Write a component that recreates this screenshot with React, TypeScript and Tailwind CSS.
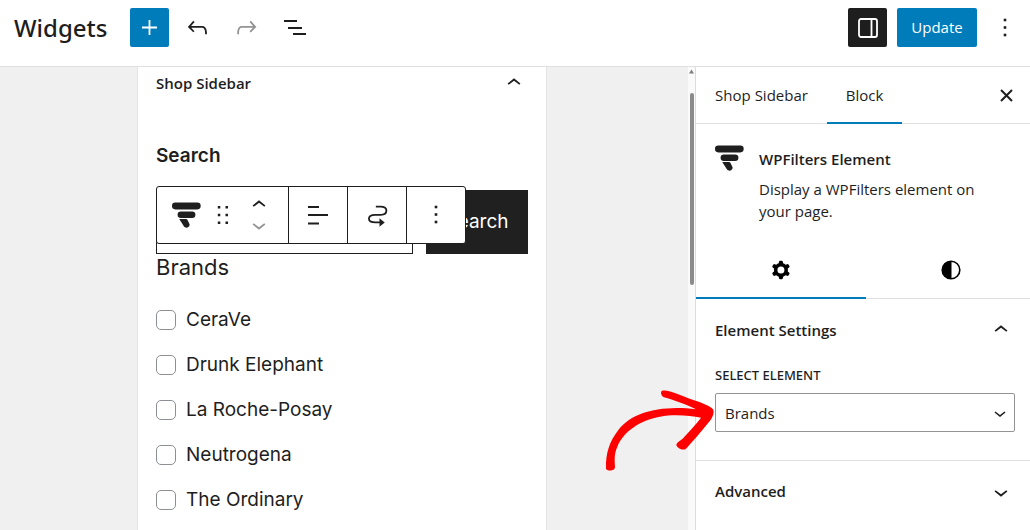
import React, { useState } from 'react';

const brands = ['CeraVe', 'Drunk Elephant', 'La Roche-Posay', 'Neutrogena', 'The Ordinary'];

const FilterLogo = () => (
    <svg className="h-[26px] w-[29px] shrink-0" viewBox="36 50 88 78" fill="currentColor">
        <rect x="36" y="51" width="87" height="21" rx="10" />
        <rect x="53" y="78" width="54" height="20" rx="10" />
        <path d="M58 101h21c2 0 3 1 4 3l6 12c3 10-11 16-17 7z" />
    </svg>
);

const ChevronUp = ({ className = 'size-7' }) => (
    <svg className={className} viewBox="0 0 24 24" fill="currentColor">
        <path d="M6.5 12.4L12 8l5.5 4.4-.9 1.2L12 10l-4.5 3.6-1-1.2z" />
    </svg>
);

const ChevronDown = ({ className = 'size-7' }) => (
    <svg className={className} viewBox="0 0 24 24" fill="currentColor">
        <path d="M17.5 11.6L12 16l-5.5-4.4.9-1.2L12 14l4.5-3.6 1 1.2z" />
    </svg>
);

const MoreIcon = () => (
    <svg className="size-7" viewBox="0 0 28 28" fill="currentColor">
        <rect x="12.7" y="4.7" width="2.6" height="2.6" />
        <rect x="12.7" y="12.2" width="2.6" height="2.6" />
        <rect x="12.7" y="19.7" width="2.6" height="2.6" />
    </svg>
);

const Header = () => (
    <header className="flex h-[67px] shrink-0 items-start justify-between border-b border-[#e0e0e0] bg-white pt-2 pr-2 pl-[14px]">
        <div className="flex h-[39px] items-center">
            <h1 className="mr-[23px] font-['Noto_Sans',sans-serif] text-2xl font-medium">Widgets</h1>
            <button aria-label="Add block" className="flex size-[39px] items-center justify-center rounded-[2px] bg-[#007cba] text-white">
                <svg className="size-[15px]" viewBox="0 0 15 15" stroke="currentColor" strokeWidth="1.8">
                    <path d="M7.5 0v15M0 7.5h15" />
                </svg>
            </button>
            <button aria-label="Undo" className="ml-[14px]">
                <svg className="size-[29px]" viewBox="0 0 24 24" fill="currentColor">
                    <path d="M18.3 11.7c-.6-.6-1.4-.9-2.3-.9H6.7l2.9-3.3-1.1-1-4.5 5L8.5 16l1-1-2.7-2.7H16c.5 0 .9.2 1.3.5 1 1 1 3.4 1 4.5v.3h1.5v-.2c0-1.5 0-4.3-1.5-5.7z" />
                </svg>
            </button>
            <button aria-label="Redo" className="ml-5 text-[#949494]">
                <svg className="size-[29px]" viewBox="0 0 24 24" fill="currentColor">
                    <path d="M15.6 6.5l-1.1 1 2.9 3.3H8c-.9 0-1.7.3-2.3.9-1.4 1.5-1.4 4.2-1.4 5.6v.2h1.5v-.3c0-1.1 0-3.5 1-4.5.3-.3.7-.5 1.3-.5h9.2L14.5 15l1.1 1.1 4.6-4.6-4.6-5z" />
                </svg>
            </button>
            <button aria-label="List view" className="ml-5">
                <svg className="size-[29px]" viewBox="0 0 29 29" stroke="currentColor" strokeWidth="2">
                    <path d="M3 8h13M7 15h14M12 21h13" />
                </svg>
            </button>
        </div>
        <div className="flex h-[39px] items-center">
            <button aria-label="Settings" className="flex size-[39px] items-center justify-center rounded-[2px] bg-[#1e1e1e] text-white">
                <svg className="size-5" viewBox="0 0 20 20" fill="none" stroke="currentColor" strokeWidth="1.8">
                    <rect x="1" y="1" width="18" height="18" rx="2" />
                    <path d="M13.5 1v18" />
                </svg>
            </button>
            <button className="mx-[10px] h-[39px] w-20 rounded-[2px] bg-[#007cba] text-[15px] text-white">Update</button>
            <button aria-label="Options" className="flex w-[35px] justify-center">
                <MoreIcon />
            </button>
        </div>
    </header>
);

const BlockToolbar = () => (
    <div className="absolute -top-1 left-0 flex h-[58px] divide-x divide-[#1e1e1e] rounded-[3px] border border-[#1e1e1e] bg-white">
        <div className="flex w-[132px] items-center pl-[15px]">
            <button aria-label="WPFilters Element"><FilterLogo /></button>
            <button aria-label="Drag" className="ml-4">
                <svg className="h-5 w-3" viewBox="0 0 12 20" fill="currentColor">
                    <path d="M.8 1h2.5v2.5H.8zM8.5 1H11v2.5H8.5zM.8 8.7h2.5v2.5H.8zM8.5 8.7H11v2.5H8.5zM.8 16.4h2.5v2.5H.8zM8.5 16.4H11v2.5H8.5z" />
                </svg>
            </button>
            <div className="ml-4 flex flex-col">
                <button aria-label="Move up" className="flex h-5 items-center"><ChevronUp /></button>
                <button aria-label="Move down" className="flex h-5 items-center text-[#949494]"><ChevronDown /></button>
            </div>
        </div>
        <button aria-label="Align" className="flex w-[59px] items-center justify-center">
            <svg className="size-5" viewBox="0 0 20 20" stroke="currentColor" strokeWidth="1.8">
                <path d="M0 2h11M0 10h20M0 18.5h11" />
            </svg>
        </button>
        <button aria-label="Transform" className="flex w-[59px] items-center justify-center">
            <svg className="size-[29px]" viewBox="219 47 88 88" fill="none" stroke="currentColor" strokeWidth="5.5">
                <path d="M258 64h14c12 0 18 5 18 12 0 8-6 13-17 13h-17c-12 0-19 5-19 12s8 11 20 11h17" />
                <path d="M269 99v26l16-13z" fill="currentColor" stroke="none" />
            </svg>
        </button>
        <button aria-label="More options" className="flex w-[58px] items-center justify-center">
            <MoreIcon />
        </button>
    </div>
);

const Canvas = () => (
    <section className="flex flex-1 justify-center overflow-hidden bg-[#f0f0f0] pr-1">
        <div className="w-[410px] border-x border-[#e4e4e4] bg-white px-[18px] pt-1">
            <button className="flex h-6 w-full items-center justify-between text-[15px] font-semibold">
                Shop Sidebar
                <ChevronUp />
            </button>
            <div className="font-[Inter,sans-serif]">
                <h2 className="mt-[47px] text-[19px] leading-7 font-semibold">Search</h2>
                <form className="relative mt-5 flex gap-[13px]" onSubmit={(e) => e.preventDefault()}>
                    <input type="search" aria-label="Search" className="h-16 min-w-0 flex-1 border border-[#1e1e1e] px-3" />
                    <button className="h-16 w-[102px] bg-[#202020] text-[19px] text-white">Search</button>
                    <BlockToolbar />
                </form>
                <h3 className="text-[22px] leading-[26px]">Brands</h3>
                <ul className="mt-[17px]">
                    {brands.map((brand) => (
                        <li key={brand} className="flex h-[45px] items-center">
                            <label className="flex items-center gap-[10px] text-[19px] leading-[30px]">
                                <input type="checkbox" className="size-5 appearance-none rounded-[5px] border border-[#8c8f94] bg-white checked:bg-[#007cba]" />
                                {brand}
                            </label>
                        </li>
                    ))}
                </ul>
            </div>
        </div>
    </section>
);

const Scrollbar = () => (
    <div className="flex w-[7px] shrink-0 flex-col items-center bg-[#fafafa] pt-[2px]">
        <svg className="h-[5px] w-[5px]" viewBox="0 0 6 5" fill="#7f7f7f">
            <path d="M3 0l3 5H0z" />
        </svg>
        <div className="mt-[19px] h-48 w-1 rounded-full bg-[#8b8b8b]" />
    </div>
);

const Sidebar = () => {
    const [element, setElement] = useState('Brands');

    return (
        <aside className="w-[335px] shrink-0 border-l border-[#dcdcdc] bg-white text-[15px]">
            {/* Tabs */}
            <div className="flex h-[57px] items-stretch border-b border-[#e0e0e0]">
                <button className="w-[131px]">Shop Sidebar</button>
                <button className="-mb-px w-[75px] border-b-2 border-[#007cba] pt-px">Block</button>
                <button aria-label="Close" className="mr-[17px] ml-auto">
                    <svg className="size-[13px]" viewBox="0 0 13 13" stroke="currentColor" strokeWidth="2">
                        <path d="M1 1l11 11M12 1L1 12" />
                    </svg>
                </button>
            </div>

            {/* Block card */}
            <div className="flex gap-[15px] pt-[21px] pr-10 pl-[19px]">
                <FilterLogo />
                <div>
                    <h2 className="pt-[3px] leading-[22px] font-semibold">WPFilters Element</h2>
                    <p className="mt-2 leading-[22px]">Display a WPFilters element on your page.</p>
                </div>
            </div>

            <div className="mt-5 flex h-[57px] overflow-x-clip border-b border-[#e0e0e0] text-black">
                <button aria-label="Settings" className="-mb-px flex w-[170px] shrink-0 items-center justify-center border-b-2 border-[#007cba]">
                    <svg className="size-7" viewBox="0 0 24 24" fill="currentColor" fillRule="evenodd">
                        <path d="M10.289 4.836A1 1 0 0111.275 4h1.306a1 1 0 01.987.836l.244 1.466c.787.26 1.503.679 2.108 1.218l1.393-.522a1 1 0 011.216.437l.653 1.13a1 1 0 01-.23 1.273l-1.148.944a6.025 6.025 0 010 2.435l1.149.946a1 1 0 01.23 1.272l-.653 1.13a1 1 0 01-1.216.437l-1.394-.522c-.605.54-1.32.958-2.108 1.218l-.244 1.466a1 1 0 01-.987.836h-1.306a1 1 0 01-.986-.836l-.244-1.466a5.995 5.995 0 01-2.108-1.218l-1.394.522a1 1 0 01-1.217-.436l-.653-1.131a1 1 0 01.23-1.272l1.149-.946a6.026 6.026 0 010-2.435l-1.148-.944a1 1 0 01-.23-1.272l.653-1.131a1 1 0 011.217-.437l1.393.522a5.994 5.994 0 012.108-1.218l.244-1.466zM14.929 12a3 3 0 11-6 0 3 3 0 016 0z" />
                    </svg>
                </button>
                <button aria-label="Styles" className="flex w-[170px] shrink-0 items-center justify-center">
                    <svg className="size-5" viewBox="0 0 20 20">
                        <circle cx="10" cy="10" r="8.8" fill="none" stroke="currentColor" strokeWidth="1.6" />
                        <path d="M10.5 1v18H10a9 9 0 010-18z" fill="currentColor" />
                    </svg>
                </button>
            </div>

            {/* Element settings */}
            <div className="border-b border-[#e0e0e0] pr-[15px] pb-7 pl-[19px]">
                <button className="flex h-[62px] w-full items-center justify-between font-semibold">
                    Element Settings
                    <ChevronUp />
                </button>
                <label htmlFor="element" className="mt-1 block font-['Noto_Sans',sans-serif] text-[13px] leading-5 font-medium uppercase">Select element</label>
                <div className="relative mt-2">
                    <select
                        id="element"
                        value={element}
                        onChange={(e) => setElement(e.target.value)}
                        className="block h-[39px] w-full appearance-none rounded-[2px] border border-[#949494] bg-white px-[9px] pt-px"
                    >
                        <option>Brands</option>
                        <option>Search</option>
                    </select>
                    <ChevronDown className="pointer-events-none absolute top-2 right-[3px] size-6" />
                    <svg className="pointer-events-none absolute top-[-5px] left-[-110px] h-[84px] w-[110px]" viewBox="45 54 330 252" fill="#ff0000">
                        <path d="M48 296C47 250 58 215 85 180C120 135 180 115 260 114C280 114 300 115 318 118C290 103 250 90 222 82C214 78 210 66 216 62C235 57 270 75 310 90C335 98 360 108 369 118C374 128 368 145 355 158C335 183 305 218 288 236C280 243 262 236 259 225C260 217 270 212 278 206C298 185 320 160 333 143C300 136 250 132 210 140C150 150 100 185 82 230C72 252 74 270 75 290C75 305 50 303 48 296Z" />
                    </svg>
                </div>
            </div>

            <button className="flex h-[61px] w-full items-center justify-between pr-[15px] pl-[19px] font-semibold">
                Advanced
                <ChevronDown />
            </button>
        </aside>
    );
};

const App = () => {
    return (
        <div className="flex h-screen flex-col overflow-hidden bg-white font-['Open_Sans',sans-serif] text-[#1e1e1e]">
            <Header />
            <main className="flex min-h-0 flex-1">
                <Canvas />
                <Scrollbar />
                <Sidebar />
            </main>
        </div>
    );
};

export default App;
